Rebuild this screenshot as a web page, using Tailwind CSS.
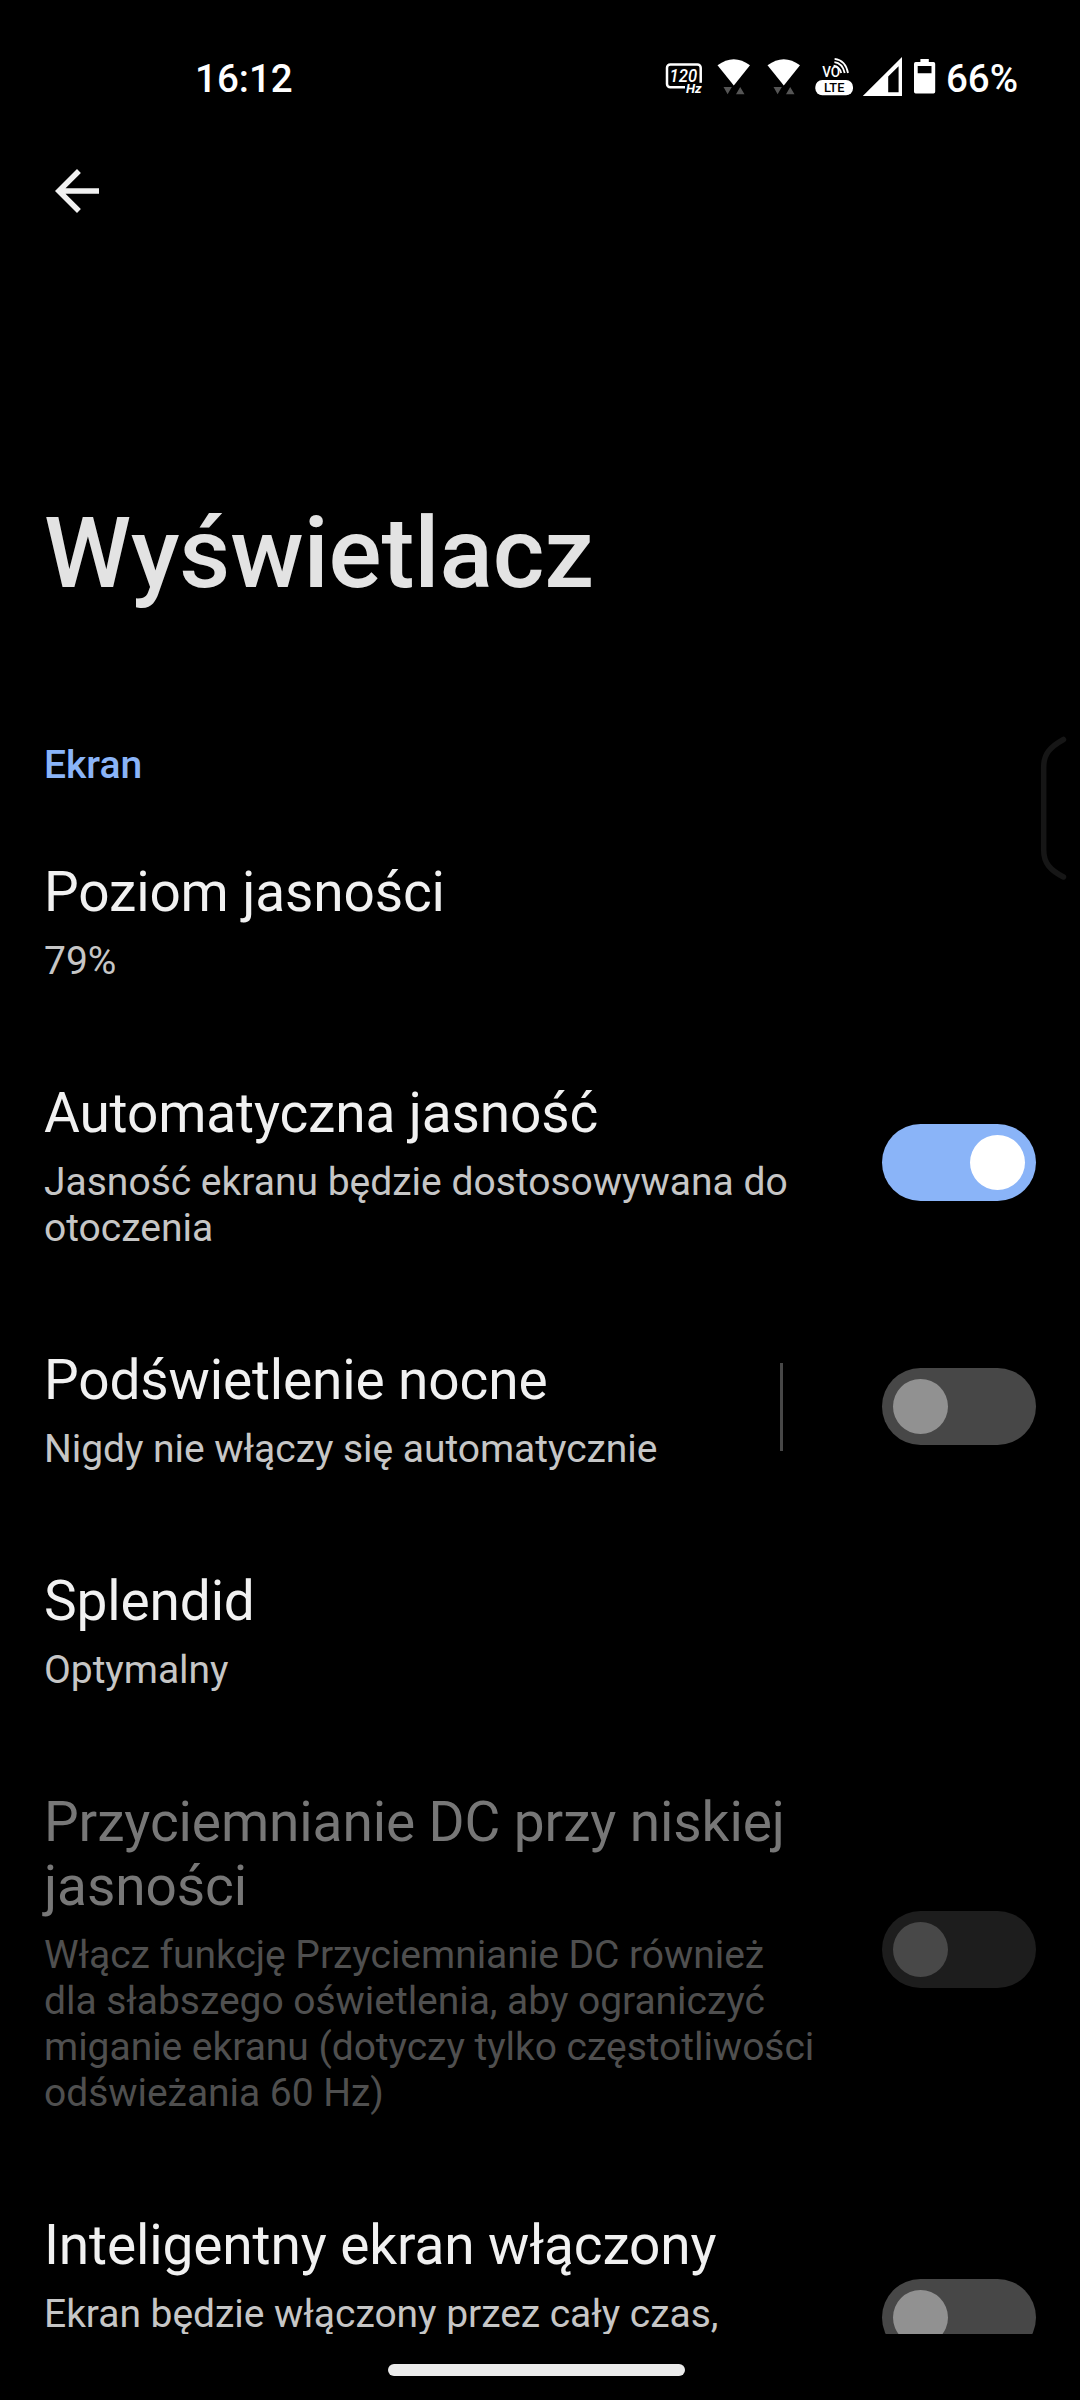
<!DOCTYPE html>
<html lang="pl">
<head>
<meta charset="utf-8">
<title>Wyświetlacz</title>
<script src="https://cdn.jsdelivr.net/npm/@tailwindcss/browser@4"></script>
</head>
<body class="bg-black">
<div class="relative flex h-[2400px] w-[1080px] flex-col overflow-hidden bg-black font-['Roboto',sans-serif] whitespace-nowrap text-[#f1f1f1]">

  <!-- Status bar -->
  <header class="flex h-[158px] shrink-0 items-start justify-between pt-[56px] pr-[62px] pl-[195px] text-[38.5px] leading-[46px] font-medium text-white">
    <span>16:12</span>
    <div class="flex">
      <svg class="-mt-[16px] h-[70px] w-[283px]" viewBox="660 40 283 70" fill="#fff">
        <path d="M694.5 87.2H700.7V67.8a3.3 3.3 0 0 0-3.3-3.3H670.3a3.3 3.3 0 0 0-3.3 3.3V84a3.3 3.3 0 0 0 3.3 3.3H685" fill="none" stroke="#fff" stroke-width="2.5" />
        <rect x="685.6" y="82.8" width="18" height="12" fill="#000" />
        <text x="669.6" y="82.3" font-size="18.6" font-weight="500" font-style="italic" textLength="27.6" lengthAdjust="spacingAndGlyphs">120</text>
        <text x="686" y="93" font-size="12.4" font-weight="700" font-style="italic" textLength="15.6" lengthAdjust="spacingAndGlyphs">Hz</text>
        <path d="M717.5 65.2Q733.8 53.2 750 65.2L733.8 85.4Z" />
        <path d="M767.5 65.2Q783.8 53.2 800 65.2L783.8 85.4Z" />
        <path d="M723.5 87H731.8L727.6 94.3ZM736 94.3H744.5L740.2 87ZM773.5 87H781.8L777.6 94.3ZM786 94.3H794.5L790.2 87Z" fill="#555" />
        <text x="822.2" y="76.8" font-size="14.2" font-weight="500" textLength="18" lengthAdjust="spacingAndGlyphs">VO</text>
        <path d="M833.6 65.6Q839.3 66.4 841.2 73M834.4 62.2Q842.3 63 844.7 73M834.6 58.8Q845.6 60.2 848 73" fill="none" stroke="#fff" stroke-width="1.8" />
        <rect x="815.3" y="80" width="37.7" height="15.2" rx="7" />
        <text x="824" y="92.2" font-size="13" font-weight="500" textLength="20.4" lengthAdjust="spacingAndGlyphs" fill="#000">LTE</text>
        <path fill-rule="evenodd" d="M862.8 96L902 57V96ZM888.2 76.5V92.2H898.6V66.2Z" />
        <path fill-rule="evenodd" d="M920.4 59H928.8V62H933.5a1.7 1.7 0 0 1 1.7 1.7V91.8a1.7 1.7 0 0 1-1.7 1.7H915.7a1.7 1.7 0 0 1-1.7-1.7V63.7a1.7 1.7 0 0 1 1.7-1.7H920.4ZM917.7 66V73.3H931.5V66Z" />
      </svg>
      <span class="pl-[3px]">66%</span>
    </div>
  </header>

  <!-- Collapsing toolbar -->
  <div class="h-[337px] shrink-0 pl-[44px]">
    <svg class="size-[66px]" viewBox="0 0 24 24" fill="#f1f1f1"><path d="M20 11H7.83l5.59-5.59L12 4l-8 8 8 8 1.41-1.41L7.83 13H20z" /></svg>
  </div>
  <h1 class="h-[247px] shrink-0 pl-[44px] text-[99px] leading-[116px] font-medium tracking-[-0.14px] text-[#e3e3e3]">Wyświetlacz</h1>

  <!-- Preferences; the list is cut off above the navigation bar -->
  <main class="flex h-[1592px] shrink-0 flex-col overflow-hidden pl-[44px]">
    <h2 class="h-[66px] shrink-0 text-[39px] leading-[46px] font-medium text-[#8ab4f8]">Ekran</h2>

    <section class="h-[221px] shrink-0 pt-[52px]">
      <h3 class="text-[55px] leading-[64px] tracking-[-0.14px]">Poziom jasności</h3>
      <p class="mt-[14px] text-[39px] leading-[46px] tracking-[-0.04px] text-[#c6c6c6]">79%</p>
    </section>

    <section class="flex h-[267px] shrink-0 items-center justify-between pr-[44px]">
      <div class="h-full pt-[52px]">
        <h3 class="text-[55px] leading-[64px] tracking-[-0.14px]">Automatyczna jasność</h3>
        <p class="mt-[14px] text-[39px] leading-[46px] text-[#c6c6c6]">Jasność ekranu będzie dostosowywana do<br>otoczenia</p>
      </div>
      <div class="flex h-[77px] w-[154px] justify-end rounded-full bg-[#8ab4f8] p-[11px]"><div class="size-[55px] rounded-full bg-white"></div></div>
    </section>

    <section class="flex h-[221px] shrink-0 items-center pr-[44px]">
      <div class="h-full w-[736px] pt-[52px]">
        <h3 class="text-[55px] leading-[64px] tracking-[-0.14px]">Podświetlenie nocne</h3>
        <p class="mt-[14px] text-[39px] leading-[46px] tracking-[-0.04px] text-[#c6c6c6]">Nigdy nie włączy się automatycznie</p>
      </div>
      <div class="h-[88px] w-[3px] bg-[#474747]"></div>
      <div class="ml-auto flex h-[77px] w-[154px] rounded-full bg-[#474747] p-[11px]"><div class="size-[55px] rounded-full bg-[#919191]"></div></div>
    </section>

    <section class="h-[221px] shrink-0 pt-[52px]">
      <h3 class="text-[55px] leading-[64px] tracking-[-0.14px]">Splendid</h3>
      <p class="mt-[14px] text-[39px] leading-[46px] tracking-[-0.04px] text-[#c6c6c6]">Optymalny</p>
    </section>

    <section class="flex h-[423px] shrink-0 items-center justify-between pr-[44px]">
      <div class="h-full pt-[52px]">
        <h3 class="text-[55px] leading-[64px] tracking-[-0.1px] text-[#777777]">Przyciemnianie DC przy niskiej<br>jasności</h3>
        <p class="mt-[14px] text-[39px] leading-[46px] tracking-[-0.04px] text-[#4f4f4f]">Włącz funkcję Przyciemnianie DC również<br>dla słabszego oświetlenia, aby ograniczyć<br>miganie ekranu (dotyczy tylko częstotliwości<br>odświeżania 60 Hz)</p>
      </div>
      <div class="flex h-[77px] w-[154px] rounded-full bg-[#1d1d1d] p-[11px]"><div class="size-[55px] rounded-full bg-[#484848]"></div></div>
    </section>

    <section class="flex h-[313px] shrink-0 items-center justify-between pr-[44px]">
      <div class="h-full pt-[52px]">
        <h3 class="text-[55px] leading-[64px] tracking-[-0.12px]">Inteligentny ekran włączony</h3>
        <p class="mt-[14px] text-[39px] leading-[46px] tracking-[-0.04px] text-[#c6c6c6]">Ekran będzie włączony przez cały czas,</p>
      </div>
      <div class="flex h-[77px] w-[154px] rounded-full bg-[#474747] p-[11px]"><div class="size-[55px] rounded-full bg-[#919191]"></div></div>
    </section>
  </main>

  <!-- Gesture navigation bar -->
  <footer class="flex h-[66px] shrink-0 justify-center pt-[30px] pr-[7px]">
    <div class="h-[12px] w-[297px] rounded-full bg-[#ebebeb]"></div>
  </footer>

  <!-- Edge panel handle -->
  <svg class="absolute top-[730px] right-0 h-[160px] w-[50px]" viewBox="1030 730 50 160" fill="none" stroke="#161616" stroke-width="5.5" stroke-linecap="round"><path d="M1063.5 739.5C1050 747 1043.7 754 1043.7 767V850C1043.7 863 1050 870 1063.5 877" /></svg>
</div>
</body>
</html>
